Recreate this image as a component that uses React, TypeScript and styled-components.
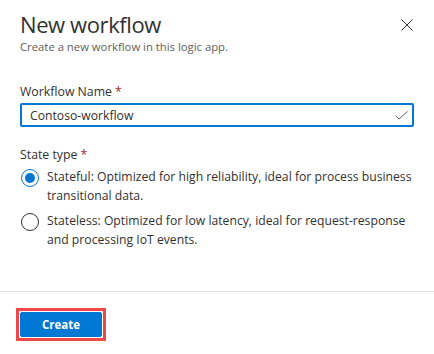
import React, { useState } from "react";
import styled, { createGlobalStyle } from "styled-components";

const GlobalStyle = createGlobalStyle`
  html, body {
    margin: 0;
    padding: 0;
    background: #ffffff;
  }
  body {
    font-family: "Open Sans", "Noto Sans", sans-serif;
    color: #323130;
  }
`;

const Panel = styled.div`
  width: 434px;
  height: 354px;
  display: flex;
  flex-direction: column;
  background: #fff;
  box-sizing: border-box;
`;

const Header = styled.div`
  display: flex;
  justify-content: space-between;
  align-items: flex-start;
  padding: 9px 20px 0 20px;
`;

const TitleBlock = styled.div`
  display: flex;
  flex-direction: column;
`;

const Title = styled.h1`
  margin: 0;
  font-size: 22px;
  line-height: 30px;
  font-weight: 500;
  letter-spacing: -0.4px;
  color: #323130;
`;

const Subtitle = styled.div`
  font-size: 11.3px;
  line-height: 15px;
  color: #605e5c;
`;

const CloseButton = styled.button`
  border: none;
  background: transparent;
  padding: 0;
  margin-top: 9px;
  width: 14px;
  height: 14px;
  display: flex;
  align-items: center;
  justify-content: center;
  cursor: pointer;
`;

const Body = styled.div`
  flex: 1;
  display: flex;
  flex-direction: column;
  padding: 30px 20px 0 20px;
`;

const Label = styled.label`
  font-size: 12.3px;
  line-height: 16px;
  color: #323130;
  margin-bottom: 3px;
`;

const Required = styled.span`
  color: #a4262c;
  margin-left: 3px;
`;

const InputWrap = styled.div`
  display: flex;
  align-items: center;
  height: 24px;
  box-sizing: border-box;
  border: 2px solid #0078d4;
  border-radius: 2px;
  padding: 0 4px 0 8px;
`;

const TextInput = styled.input`
  flex: 1;
  border: none;
  outline: none;
  padding: 0;
  font-family: inherit;
  font-size: 12.2px;
  color: #323130;
  background: transparent;
`;

const Group = styled.div<{ $top?: number }>`
  display: flex;
  flex-direction: column;
  margin-top: ${(p) => p.$top ?? 0}px;
`;

const OptionList = styled.div`
  display: flex;
  flex-direction: column;
  gap: 8px;
  margin-top: 3px;
`;

const Option = styled.label`
  display: flex;
  align-items: flex-start;
  gap: 8px;
  cursor: pointer;
`;

const Circle = styled.span<{ $checked: boolean }>`
  flex: none;
  width: 18px;
  height: 18px;
  box-sizing: border-box;
  border-radius: 50%;
  border: 1px solid ${(p) => (p.$checked ? "#0078d4" : "#323130")};
  display: flex;
  align-items: center;
  justify-content: center;
  margin-left: 1px;
  &::after {
    content: "";
    width: 10px;
    height: 10px;
    border-radius: 50%;
    background: ${(p) => (p.$checked ? "#0078d4" : "transparent")};
  }
`;

const OptionText = styled.span`
  font-size: 12.2px;
  line-height: 18.5px;
  color: #323130;
  margin-top: -1px;
`;

const Footer = styled.div`
  border-top: 1px solid #e1dfdd;
  padding: 16px;
  height: 63px;
  box-sizing: border-box;
`;

const Highlight = styled.div`
  display: inline-flex;
  border: 3px solid #f04848;
  padding: 1px;
`;

const PrimaryButton = styled.button`
  width: 82px;
  height: 25px;
  border: 1px solid #0078d4;
  background: #0078d4;
  color: #fff;
  font-family: inherit;
  font-size: 11.5px;
  font-weight: 700;
  border-radius: 2px;
  cursor: pointer;
  padding: 0;
`;

const options = [
  {
    id: "stateful",
    text: "Stateful: Optimized for high reliability, ideal for process business transitional data.",
  },
  {
    id: "stateless",
    text: "Stateless: Optimized for low latency, ideal for request-response and processing IoT events.",
  },
];

export default function App() {
  const [name, setName] = useState("Contoso-workflow");
  const [stateType, setStateType] = useState("stateful");

  return (
    <>
      <GlobalStyle />
      <Panel>
        <Header>
          <TitleBlock>
            <Title>New workflow</Title>
            <Subtitle>Create a new workflow in this logic app.</Subtitle>
          </TitleBlock>
          <CloseButton aria-label="Close">
            <svg width="12" height="12" viewBox="0 0 12 12">
              <path d="M0.5 0.5 L11.5 11.5 M11.5 0.5 L0.5 11.5" stroke="#323130" strokeWidth="1" fill="none" />
            </svg>
          </CloseButton>
        </Header>
        <Body>
          <Group>
            <Label htmlFor="workflowName">
              Workflow Name<Required>*</Required>
            </Label>
            <InputWrap>
              <TextInput id="workflowName" value={name} onChange={(e) => setName(e.target.value)} />
              <svg width="13" height="9" viewBox="0 0 13 9">
                <path d="M0.5 4.5 L4 8 L12.5 0.5" stroke="#605e5c" strokeWidth="1" fill="none" />
              </svg>
            </InputWrap>
          </Group>
          <Group $top={20}>
            <Label>
              State type<Required>*</Required>
            </Label>
            <OptionList>
              {options.map((o) => (
                <Option key={o.id} onClick={() => setStateType(o.id)}>
                  <Circle $checked={stateType === o.id} />
                  <OptionText>{o.text}</OptionText>
                </Option>
              ))}
            </OptionList>
          </Group>
        </Body>
        <Footer>
          <Highlight>
            <PrimaryButton>Create</PrimaryButton>
          </Highlight>
        </Footer>
      </Panel>
    </>
  );
}
